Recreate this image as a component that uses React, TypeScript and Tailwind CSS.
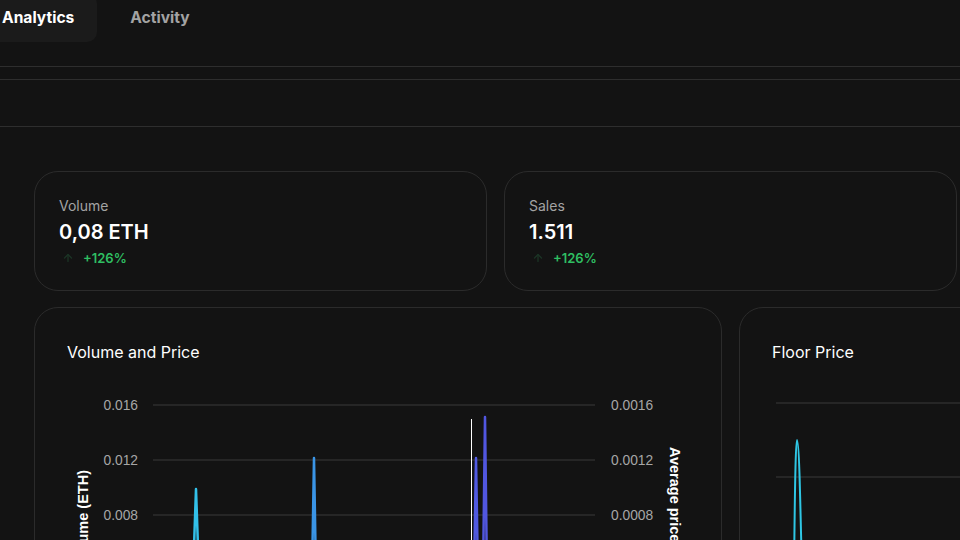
import { ArrowUp } from "lucide-react";

const stats = [
  { label: "Volume", value: "0,08 ETH", change: "+126%" },
  { label: "Sales", value: "1.511", change: "+126%" },
];

const leftTicks = ["0.016", "0.012", "0.008", "0.004"];
const rightTicks = ["0.0016", "0.0012", "0.0008", "0.0004"];

function StatCard({ label, value, change }: { label: string; value: string; change: string }) {
  return (
    <div className="w-[453px] h-[120px] rounded-[24px] border border-[#2b2b2b] px-[24px] pt-[24px]">
      <div className="text-[14px] leading-5 text-[#a3a3a3]">{label}</div>
      <div className="mt-[2px] text-[20px] leading-7 font-semibold text-white">{value}</div>
      <div className="mt-[2px] flex items-center gap-[9px] text-[13px] leading-5 font-semibold text-[#2fbf62]">
        <ArrowUp className="ml-[3px] h-[12px] w-[12px] text-[#1c3526]" strokeWidth={2.5} />
        <span>{change}</span>
      </div>
    </div>
  );
}

function VolumeChart() {
  const grid = [29, 84, 139, 194];
  return (
    <svg width="622" height="200" className="mt-3 block" style={{ fontFamily: '"Liberation Sans", Arial, sans-serif' }}>
      <defs>
        <linearGradient id="vol" x1="86" y1="0" x2="528" y2="0" gradientUnits="userSpaceOnUse">
          <stop offset="0" stopColor="#2fd0ea" />
          <stop offset="0.4" stopColor="#3b8fe6" />
          <stop offset="0.75" stopColor="#5156e0" />
          <stop offset="1" stopColor="#5156e0" />
        </linearGradient>
      </defs>
      {grid.map((y, i) => (
        <g key={y}>
          <line x1="86" x2="528" y1={y} y2={y} stroke="#3a3a3a" strokeWidth="1" />
          <text x="71" y={y + 5} textAnchor="end" fontSize="13.8" fill="#a6a6a6">
            {leftTicks[i]}
          </text>
          <text x="544" y={y + 5} fontSize="13.8" fill="#a6a6a6">
            {rightTicks[i]}
          </text>
        </g>
      ))}
      <text transform="translate(21,94) rotate(-90)" textAnchor="end" fontSize="14.5" fontWeight="700" fill="#ffffff">
        Volume (ETH)
      </text>
      <text transform="translate(603,71) rotate(90)" fontSize="14.5" fontWeight="700" fill="#ffffff">
        Average price
      </text>
      <path
        d="M126 200 L129 113 L132 200 M245 200 L247 82 L249 200 M407 200 L409 82 L411 200 M416 200 L418 41 L420 200"
        fill="none"
        stroke="url(#vol)"
        strokeWidth="2.5"
        strokeLinejoin="round"
      />
      <line x1="404.5" x2="404.5" y1="43" y2="200" stroke="#ffffff" strokeWidth="1" />
    </svg>
  );
}

function FloorChart() {
  return (
    <svg width="200" height="200" className="mt-3 block">
      <line x1="4" x2="200" y1="27" y2="27" stroke="#3a3a3a" strokeWidth="1" />
      <line x1="4" x2="200" y1="101" y2="101" stroke="#3a3a3a" strokeWidth="1" />
      <path d="M22 200 C23 90, 24 64, 25 64 C27 64, 28 110, 30 200" fill="none" stroke="#2fc6e4" strokeWidth="2" />
    </svg>
  );
}

export default function App() {
  return (
    <div className="w-[960px] h-[540px] overflow-hidden bg-[#131313] font-['Inter',sans-serif]">
      <div className="mt-[-6px] ml-[-21px] flex items-center gap-[33px] h-[48px]">
        <div className="h-[48px] px-[23px] flex items-center rounded-[10px] bg-[#1b1b1b] text-[15.6px] font-bold text-white">
          Analytics
        </div>
        <div className="text-[15.6px] font-bold text-[#a3a3a3]">Activity</div>
      </div>
      <div className="h-[25px] border-b border-[#2e2e2e]" />
      <div className="mt-[12px] h-[48px] border-y border-[#2e2e2e]" />
      <div className="mt-[44px] ml-[34px] flex gap-[17px]">
        {stats.map((s) => (
          <StatCard key={s.label} {...s} />
        ))}
      </div>
      <div className="mt-[16px] ml-[34px] flex gap-[17px]">
        <div className="w-[688px] h-[300px] shrink-0 rounded-[24px] border border-[#2b2b2b] px-[32px] pt-[32px]">
          <div className="text-[16px] leading-6 text-white">Volume and Price</div>
          <VolumeChart />
        </div>
        <div className="w-[688px] h-[300px] shrink-0 rounded-[24px] border border-[#2b2b2b] px-[32px] pt-[32px]">
          <div className="text-[16px] leading-6 text-white">Floor Price</div>
          <FloorChart />
        </div>
      </div>
    </div>
  );
}
